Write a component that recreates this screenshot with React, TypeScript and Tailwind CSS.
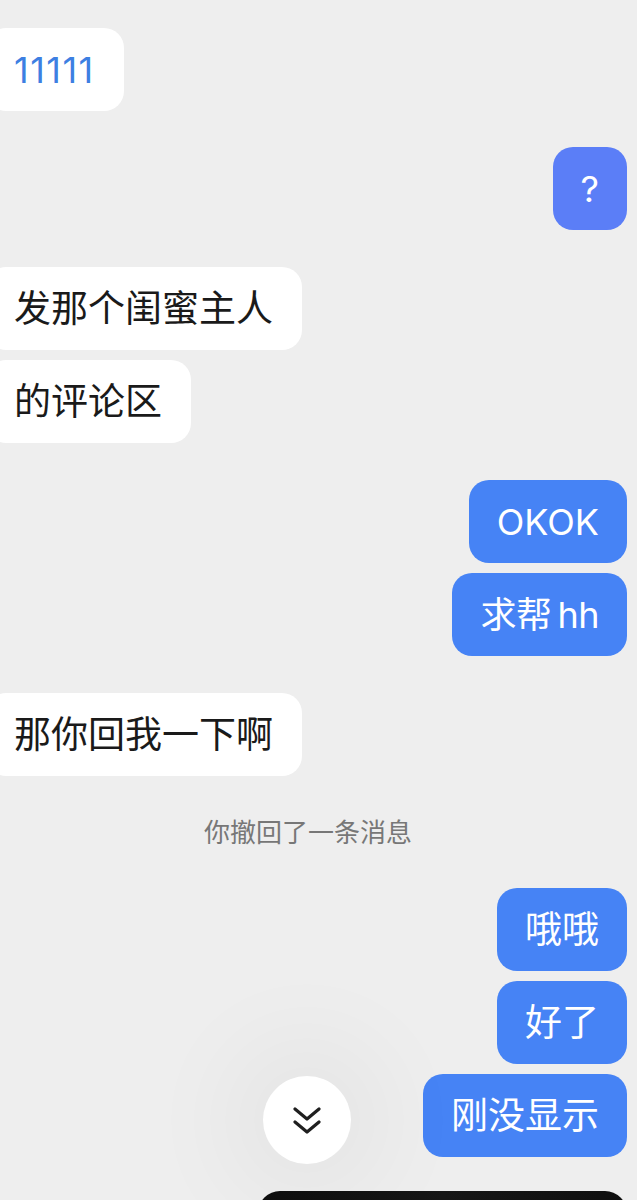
const font = { fontFamily: 'Inter, "Noto Sans CJK SC", sans-serif' };

type Msg =
  | { kind: 'in'; text: string; extra?: string; gap: number }
  | { kind: 'out'; text: string; extra?: string; color?: string; gap: number }
  | { kind: 'sys'; text: string };

const messages: Msg[] = [
  { kind: 'in', text: '11111', extra: 'text-[#3d7fe2] text-[36px] tracking-[1.5px]', gap: 0 },
  { kind: 'out', text: '?', color: 'bg-[#5b7ef7]', extra: 'text-[36px]', gap: 36 },
  { kind: 'in', text: '发那个闺蜜主人', gap: 37 },
  { kind: 'in', text: '的评论区', gap: 10 },
  { kind: 'out', text: 'OKOK', extra: 'text-[36px]', gap: 37 },
  { kind: 'out', text: '求帮 hh', extra: 'text-[36px] tracking-[-0.5px]', gap: 10 },
  { kind: 'in', text: '那你回我一下啊', gap: 37 },
  { kind: 'sys', text: '你撤回了一条消息' },
  { kind: 'out', text: '哦哦', gap: 0 },
  { kind: 'out', text: '好了', gap: 10 },
  { kind: 'out', text: '刚没显示', gap: 10 },
];

function Bubble({ msg }: { msg: Msg }) {
  if (msg.kind === 'sys') {
    return (
      <div className="h-[112px] flex items-center justify-center pr-[21px]">
        <span className="text-[26px] text-[#777777]">{msg.text}</span>
      </div>
    );
  }
  if (msg.kind === 'in') {
    return (
      <div className="flex" style={{ marginTop: msg.gap }}>
        <div
          className={`-ml-[14px] h-[83px] pl-[28px] pr-[29px] flex items-center rounded-[20px] bg-white ${
            msg.extra ?? 'text-[37px] text-[#1a1a1a]'
          }`}
        >
          {msg.text}
        </div>
      </div>
    );
  }
  return (
    <div className="flex justify-end pr-[10px]" style={{ marginTop: msg.gap }}>
      <div
        className={`h-[83px] px-[28px] flex items-center rounded-[20px] text-white ${msg.extra ?? 'text-[37px]'} ${
          msg.color ?? 'bg-[#4683f5]'
        }`}
      >
        {msg.text === '求帮 hh' ? (
          <>
            求帮<span className="ml-[6px]">hh</span>
          </>
        ) : (
          msg.text
        )}
      </div>
    </div>
  );
}

export default function App() {
  return (
    <div className="relative w-full h-[1200px] overflow-hidden bg-[#eeeeee]" style={font}>
      <div className="flex flex-col pt-[28px]">
        {messages.map((m, i) => (
          <Bubble key={i} msg={m} />
        ))}
      </div>

      {/* scroll to bottom */}
      <div className="absolute left-[263px] top-[1076px] w-[88px] h-[88px] rounded-full bg-white flex items-center justify-center shadow-[0_0_100px_40px_rgba(0,0,0,0.04)]">
        <svg width="28" height="28" viewBox="0 0 28 28" fill="none" stroke="#1f1f1f" strokeWidth="3.2" strokeLinecap="round" strokeLinejoin="round">
          <path d="M2 3 L14 13 L26 3" />
          <path d="M2 16 L14 26 L26 16" />
        </svg>
      </div>

      {/* bottom preview */}
      <div className="absolute left-[258px] top-[1191px] w-[369px] h-[40px] rounded-t-[22px] bg-gradient-to-r from-[#0d0d0d] via-[#161616] to-[#0f0f0f]" />
    </div>
  );
}
